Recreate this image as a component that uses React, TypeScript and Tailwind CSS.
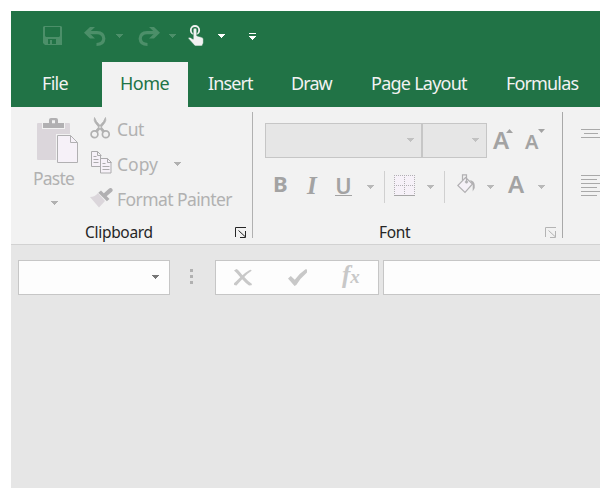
import React from 'react';
import clsx from 'clsx';

const Caret = ({ className }: { className?: string }) => (
  <svg width="7" height="4" viewBox="0 0 7 4" shapeRendering="crispEdges" className={clsx('shrink-0', className)}>
    <path d="M0 0h7v1H6v1H5v1H4v1H3V3H2V2H1V1H0z" fill="currentColor" />
  </svg>
);

const SaveIcon = () => (
  <svg width="19" height="19" viewBox="0 0 19 19" fill="currentColor" className="shrink-0">
    <path fillRule="evenodd" d="M1 0h17l1 1v18H2l-2-2V1zM2 1v9l1 1h13l1-1V1zM5 13v5h2v-4h2v4h4v-5z" />
  </svg>
);

const UndoIcon = ({ flip }: { flip?: boolean }) => (
  <svg width="22" height="20" viewBox="0 0 22 20" className={clsx('shrink-0', flip && '-scale-x-100')}>
    <path d="M3 5.700h10q6.500.3 6.800 6Q19.500 17.500 12.500 17.500" fill="none" stroke="currentColor" strokeWidth="3.200" />
    <path d="M0 5.700 6 0h5L5 5.700l6 5.800H6z" fill="currentColor" />
  </svg>
);

const TouchIcon = () => (
  <svg width="16" height="21" viewBox="0 0 16 21" className="shrink-0">
    <circle cx="7" cy="5.200" r="4.200" fill="none" stroke="#f2f2f2" strokeWidth="1.800" />
    <path d="M5.200 4.800q0-1.800 1.800-1.800t1.800 1.800v6L14 12.300q1.400.4 1.400 1.900V18l-1.300 3H7L.2 13.400q0-1.200 1.800-1.200l3.200 2z" fill="#f2f2f2" stroke="#217346" strokeWidth=".6" />
  </svg>
);

const CustomizeIcon = () => (
  <svg width="7" height="8" viewBox="0 0 7 8" shapeRendering="crispEdges" fill="#fff" className="shrink-0">
    <path d="M0 0h7v1H0zM0 3h7v1H6v1H5v1H4v1H3V6H2V5H1V4H0z" />
  </svg>
);

const PasteIcon = () => (
  <svg width="42" height="46" viewBox="0 0 42 46" className="shrink-0">
    <rect x="0" y="5" width="33" height="37" rx="1" fill="#dbd6db" />
    <path d="M5 4h23v7H5z" fill="#f2f2f2" />
    <path fillRule="evenodd" d="M6 5h6V2q0-2 2-2h5q2 0 2 2v3h6v5H6zM15 2.300h3v3h-3z" fill="#b1b0b2" />
    <path d="M19 16h16l7 7v23H19z" fill="#f2f2f2" />
    <path d="M20.500 17.500h13l7 7v20h-20z" fill="#f6f1f8" stroke="#b1b0b2" />
    <path d="M33.500 17.500v7h7" fill="none" stroke="#b1b0b2" />
  </svg>
);

const CutIcon = () => (
  <svg width="21" height="22" viewBox="0 0 21 22" fill="none" stroke="#b1b1b1" className="shrink-0">
    <path d="M4.500.5q-1 3 .7 5.200L12.500 15l2.500-.7L6.500 4.500zM15.500.5q1 3-.7 5.200L7.500 15 5 14.300 13.500 4.500z" fill="#b1b1b1" strokeWidth=".8" />
    <circle cx="4.500" cy="17.300" r="3.400" strokeWidth="1.700" />
    <circle cx="15.800" cy="17.300" r="3.400" strokeWidth="1.700" />
  </svg>
);

const CopyIcon = () => (
  <svg width="21" height="23" viewBox="0 0 21 23" fill="#f6f1f8" stroke="#acabad" className="shrink-0">
    <path d="M.5.5h6l3 3v12h-9zM6.500.5v4h4" />
    <path d="M2.500 5.500h3M2.500 8.500h5M2.500 11.500h5" />
    <path d="M9.500 7.500h7l3.500 3.500v11H9.500z" />
    <path d="M16.500 7.500v4h4M11.500 12.500h3M11.500 15.500h7M11.500 18.500h7" fill="none" />
  </svg>
);

const PainterIcon = () => (
  <svg width="23" height="20" viewBox="0 0 23 20" className="shrink-0">
    <path d="M0 9q5 0 8-4l7 8L9 19.500z" fill="#dbd6db" />
    <path d="M8.300 4.800 11 2.500l8.500 8.500-2.600 2.300z" fill="#b1b0b2" />
    <path d="m15.500 6.500 5-4.300" stroke="#b1b0b2" strokeWidth="4.200" strokeLinecap="round" />
  </svg>
);

const Launcher = ({ className }: { className?: string }) => (
  <svg width="12" height="11" viewBox="0 0 12 11" fill="none" stroke="currentColor" className={clsx('shrink-0', className)}>
    <path d="M.5 10V.5H11M3.500 3.500l6.500 6M10.500 4v6.500H5" />
  </svg>
);

const BorderIcon = () => (
  <svg width="21" height="21" viewBox="0 0 21 21" shapeRendering="crispEdges" className="shrink-0">
    <path d="M0 0h21v20H0z" fill="#f6f1f8" />
    <path d="M0 .5h21M0 10.500h21M.5 0v20M10.500 0v20M20.500 0v20" stroke="#b1b0b2" strokeDasharray="1 1" />
    <path d="M0 20.500h21" stroke="#a6a6a6" />
  </svg>
);

const FillIcon = () => (
  <svg width="19" height="20" viewBox="0 0 19 20" fill="none" stroke="#b1b0b2" className="shrink-0">
    <path d="m8.500 3.500 7 6.500-7.500 8.500L.8 11.500z" fill="#f6f1f8" strokeWidth="1.200" />
    <path d="M5.500 6V.8h4v7" strokeWidth="1.200" />
    <circle cx="9.500" cy="8" r="1.300" fill="#b1b0b2" strokeWidth=".5" />
    <path d="M13 6q4.500 1 4.700 5v3l-2 3.500V11z" fill="#b1b0b2" stroke="none" />
  </svg>
);

const AlignLines = () => (
  <svg width="19" height="68" viewBox="0 0 19 68" stroke="#a9a9a9" shapeRendering="crispEdges" className="shrink-0">
    <path d="M0 .5h19M3 4.500h14M0 8.500h19M0 46.500h19M0 50.500h16M0 54.500h19M0 58.500h16M0 62.500h19M0 66.500h16" />
  </svg>
);

const GrowIcon = ({ down }: { down?: boolean }) => (
  <svg width="7" height="4" viewBox="0 0 7 4" className={clsx('shrink-0', down && 'rotate-180')}>
    <path d="M0 4 3.500 0 7 4z" fill="#a3a3a3" />
  </svg>
);

const VLine = ({ className }: { className?: string }) => <div className={clsx('w-px shrink-0', className)} />;

function TitleBar() {
  return (
    <div className="flex h-[51px] items-center pb-0.5 pl-8 text-[#4c8f69]">
      <SaveIcon />
      <div className="ml-[22px] pt-[3px]"><UndoIcon /></div>
      <Caret className="ml-[10px] mt-px" />
      <div className="ml-[15px] pt-[3px]"><UndoIcon flip /></div>
      <Caret className="ml-[9px] mt-px" />
      <div className="ml-3"><TouchIcon /></div>
      <Caret className="ml-[14px] mt-px text-white" />
      <div className="ml-6 pt-[3px]"><CustomizeIcon /></div>
    </div>
  );
}

function Tabs() {
  return (
    <div className="flex h-[45px] whitespace-nowrap text-[18px] leading-[43px] text-[#f2f2f2]">
      <div className="w-[91px] shrink-0 pl-[31px] tracking-[-0.7px]">File</div>
      <div className="w-[86px] shrink-0 bg-[#f2f2f2] pl-[18px] tracking-[-0.5px] text-[#217346]">Home</div>
      <div className="w-[101px] shrink-0 pl-5 tracking-[-0.9px]">Insert</div>
      <div className="w-[81px] shrink-0 pl-0.5 tracking-[-0.9px]">Draw</div>
      <div className="w-[135px] shrink-0 pl-px tracking-[-0.75px]">Page Layout</div>
      <div className="shrink-0 pl-px tracking-[-0.85px]">Formulas</div>
    </div>
  );
}

function ClipboardGroup() {
  return (
    <div className="flex w-[241px] shrink-0 flex-col text-[17.5px] text-[#b1b1b1]">
      <div className="flex h-[113px]">
        <div className="flex w-[79px] shrink-0 flex-col pl-[22px] pt-[11px]">
          <div className="pl-1"><PasteIcon /></div>
          <div className="mt-[2px] h-6 leading-6 tracking-[-0.8px]">Paste</div>
          <Caret className="ml-[18px] mt-[11px]" />
        </div>
        <div className="flex flex-col whitespace-nowrap pt-[5px]">
          <div className="flex h-[35px] items-center tracking-[-0.4px]"><div className="-mt-[3px] w-[27px]"><CutIcon /></div>Cut</div>
          <div className="flex h-[35px] items-center"><div className="-mt-1 w-[27px] pl-px"><CopyIcon /></div><div className="w-[57px]">Copy</div><Caret className="-mt-px" /></div>
          <div className="flex h-[35px] items-center tracking-[-0.58px]"><div className="-mt-[3px] w-[27px]"><PainterIcon /></div>Format Painter</div>
        </div>
      </div>
      <div className="flex h-6 pl-[74px] text-[15.500px] leading-6 text-[#262626]">
        <div className="w-[150px] tracking-[-0.3px]">Clipboard</div>
        <Launcher className="mt-[7px]" />
      </div>
    </div>
  );
}

function FontGroup() {
  return (
    <div className="flex w-[309px] shrink-0 flex-col text-[#a3a3a3]">
      <div className="flex h-[51px] pl-3 pt-4">
        <div className="flex h-[35px] w-[157px] items-center justify-end border border-[#c6c6c6] bg-[#e6e6e6] pb-px pr-[7px] text-[#c1c1c1]"><Caret /></div>
        <div className="-ml-px flex h-[35px] w-[66px] items-center justify-end border border-l-2 border-[#c6c6c6] bg-[#e6e6e6] pb-px pr-[7px] text-[#c1c1c1]"><Caret /></div>
        <div className="ml-[6px] flex pt-1.5">
          <span className="-mt-px w-[13px] text-[24px] font-semibold leading-6">A</span>
          <GrowIcon />
        </div>
        <div className="ml-[12px] flex pt-1.5">
          <span className="w-[13px] pt-px text-[20px] font-semibold leading-6">A</span>
          <GrowIcon down />
        </div>
      </div>
      <div className="flex h-[55px] items-center text-[22px] leading-8">
        <b className="mb-[5px] w-[54px] pl-5">B</b>
        <i className="mt-px w-[29px] font-['Liberation_Serif',serif] text-[25px] font-bold">I</i>
        <span className="-ml-px w-[17px] border-b border-[#a3a3a3] text-center font-semibold leading-[19px]">U</span>
        <Caret className="ml-[15px] mt-[3px] text-[#b9b9b9]" />
        <VLine className="ml-[10px] mt-[3px] h-8 bg-[#d0d0d0]" />
        <div className="ml-[9px]"><BorderIcon /></div>
        <Caret className="ml-3 mt-[3px] text-[#b9b9b9]" />
        <VLine className="ml-[10px] mt-[3px] h-8 bg-[#d0d0d0]" />
        <div className="ml-3 pb-[3px]"><FillIcon /></div>
        <Caret className="ml-[11px] mt-[3px] text-[#b9b9b9]" />
        <span className="mb-[3px] ml-[14px] w-[30px] text-[24px] font-semibold">A</span>
        <Caret className="mt-[3px] text-[#b9b9b9]" />
      </div>
      <div className="mt-[7px] flex h-6 pl-[126px] text-[15.500px] leading-6 text-[#262626]">
        <div className="w-[166px] tracking-[-0.3px]">Font</div>
        <Launcher className="mt-[7px] text-[#b4b4b4]" />
      </div>
    </div>
  );
}

function FormulaBar() {
  return (
    <div className="flex pl-[7px] pt-[15px]">
      <div className="flex h-[35px] w-[152px] shrink-0 items-center justify-end border border-[#c6c6c6] bg-[#fdfdfd] pb-px pr-[10px] text-[#777]"><Caret /></div>
      <div className="ml-5 mr-[22px] flex shrink-0 flex-col gap-[3px] pt-[9px]">
        <div className="size-[3px] bg-[#b1b1b1]" />
        <div className="size-[3px] bg-[#b1b1b1]" />
        <div className="size-[3px] bg-[#b1b1b1]" />
      </div>
      <div className="flex h-[35px] w-[164px] shrink-0 items-center border border-[#c6c6c6] bg-[#fdfdfd] pl-[18px] text-[#c8c8c8]">
        <svg width="18" height="17" viewBox="0 0 18 17" className="mb-px shrink-0" fill="currentColor">
          <path d="M0 1.500 2.500 0q1.500.5 6 6.200Q14 1.500 16.800.8q1.200.7.500 1.200Q14 4 10.300 8q4 4.500 7.700 7l-.5 1.300-2.500.2q-3-2-6.800-6.300Q4.500 14 2.500 16.500L.3 16q-.7-1 0-2Q2.500 12 6.300 8.200 3 4 0 1.500z" />
        </svg>
        <svg width="19" height="17" viewBox="0 0 19 17" className="ml-9 shrink-0" fill="currentColor">
          <path d="M0 9.500 2.800 7l4 3.700Q12 4 17.500.3L19 .5v3Q12 9.500 8.300 16L6.500 17z" />
        </svg>
        <div className="ml-[35px] flex items-baseline pb-[3px] font-['Liberation_Serif',serif] italic">
          <span className="text-[25px] font-bold leading-6">f</span><span className="text-[19px] font-bold leading-6">x</span>
        </div>
      </div>
      <div className="ml-1 h-[35px] min-w-0 flex-1 border border-r-0 border-[#c6c6c6] bg-[#fdfdfd]" />
    </div>
  );
}

export default function App() {
  return (
    <div className="h-[488px] w-[600px] overflow-hidden bg-white pl-[11px] pt-[11px] font-['Noto_Sans',sans-serif]">
      <div className="flex h-[477px] flex-col overflow-hidden bg-[#e6e6e6]">
        <div className="shrink-0 bg-[#217346]">
          <TitleBar />
          <Tabs />
        </div>
        <div className="flex h-[138px] shrink-0 border-b border-[#d2d2d2] bg-[#f2f2f2]">
          <ClipboardGroup />
          <VLine className="mt-[5px] h-[126px] bg-[#b1b1b1]" />
          <FontGroup />
          <VLine className="mt-[5px] h-[126px] bg-[#a9a9a9]" />
          <div className="ml-[18px] mt-[22px]"><AlignLines /></div>
        </div>
        <FormulaBar />
      </div>
    </div>
  );
}
